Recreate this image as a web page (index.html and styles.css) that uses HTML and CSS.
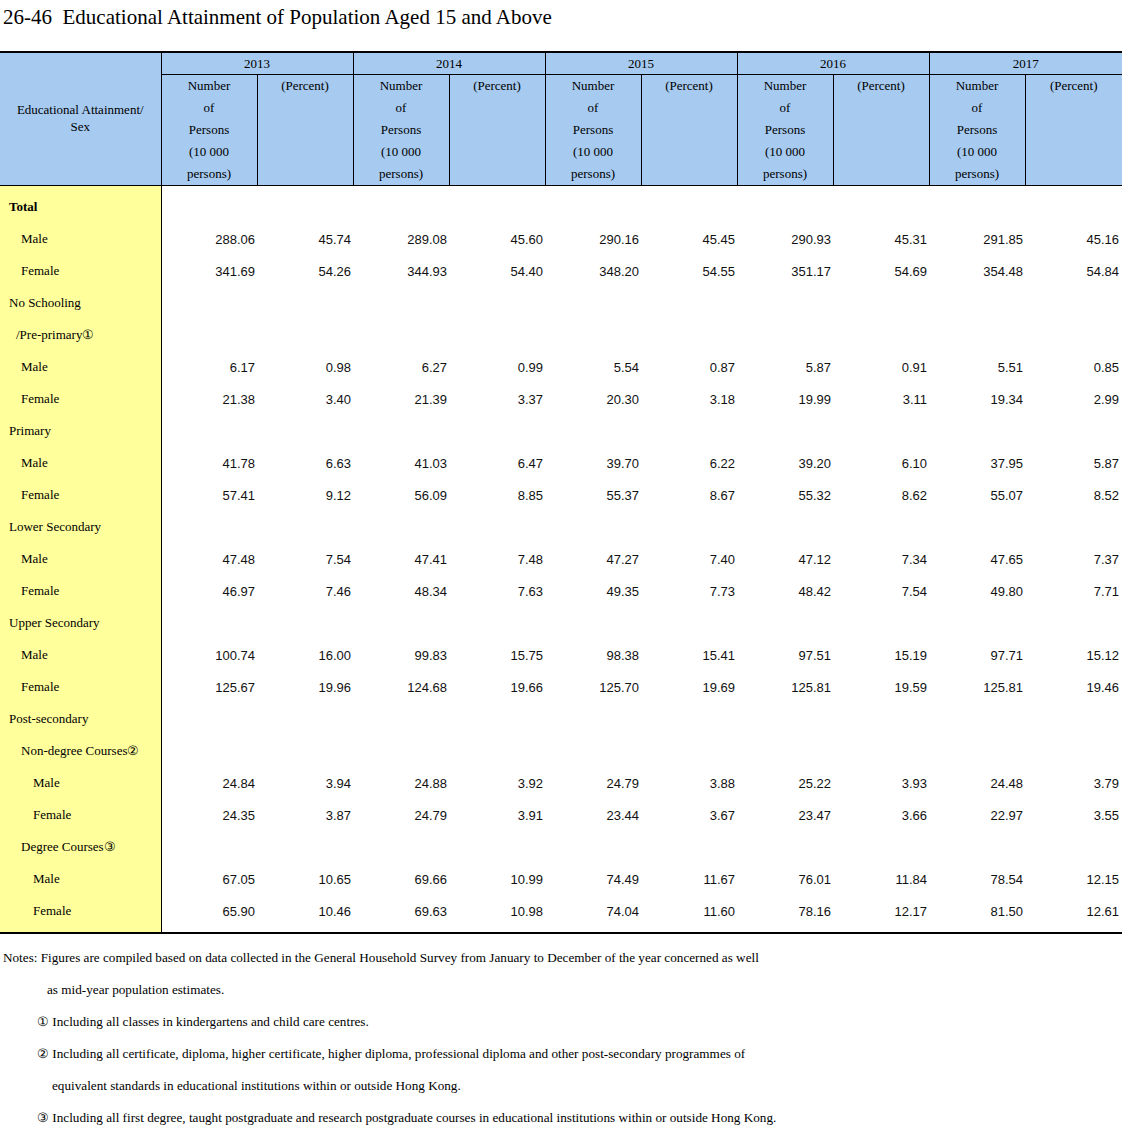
FILE: index.html
```html
<!DOCTYPE html>
<html>
<head>
<meta charset="utf-8">
<link rel="stylesheet" href="styles.css">
</head>
<body>
<h1 class="title">26-46&nbsp; Educational Attainment of Population Aged 15 and Above</h1>
<table class="tbl">
<colgroup>
<col class="c-label">
<col class="c-num"><col class="c-num"><col class="c-num"><col class="c-num"><col class="c-num">
<col class="c-num"><col class="c-num"><col class="c-num"><col class="c-num"><col class="c-last">
</colgroup>
<thead>
<tr class="yr">
<th class="h-label" rowspan="2">Educational Attainment/<br>Sex</th>
<th colspan="2">2013</th><th colspan="2">2014</th><th colspan="2">2015</th><th colspan="2">2016</th><th colspan="2">2017</th>
</tr>
<tr class="sub">
<th>Number<br>of<br>Persons<br>(10 000<br>persons)</th><th>(Percent)</th>
<th>Number<br>of<br>Persons<br>(10 000<br>persons)</th><th>(Percent)</th>
<th>Number<br>of<br>Persons<br>(10 000<br>persons)</th><th>(Percent)</th>
<th>Number<br>of<br>Persons<br>(10 000<br>persons)</th><th>(Percent)</th>
<th>Number<br>of<br>Persons<br>(10 000<br>persons)</th><th>(Percent)</th>
</tr>
</thead>
<tbody>
<tr><td class="lbl l1 bold">Total</td><td></td><td></td><td></td><td></td><td></td><td></td><td></td><td></td><td></td><td></td></tr>
<tr><td class="lbl l2">Male</td><td>288.06</td><td>45.74</td><td>289.08</td><td>45.60</td><td>290.16</td><td>45.45</td><td>290.93</td><td>45.31</td><td>291.85</td><td>45.16</td></tr>
<tr><td class="lbl l2">Female</td><td>341.69</td><td>54.26</td><td>344.93</td><td>54.40</td><td>348.20</td><td>54.55</td><td>351.17</td><td>54.69</td><td>354.48</td><td>54.84</td></tr>
<tr><td class="lbl l1">No Schooling</td><td></td><td></td><td></td><td></td><td></td><td></td><td></td><td></td><td></td><td></td></tr>
<tr><td class="lbl lp">/Pre-primary①</td><td></td><td></td><td></td><td></td><td></td><td></td><td></td><td></td><td></td><td></td></tr>
<tr><td class="lbl l2">Male</td><td>6.17</td><td>0.98</td><td>6.27</td><td>0.99</td><td>5.54</td><td>0.87</td><td>5.87</td><td>0.91</td><td>5.51</td><td>0.85</td></tr>
<tr><td class="lbl l2">Female</td><td>21.38</td><td>3.40</td><td>21.39</td><td>3.37</td><td>20.30</td><td>3.18</td><td>19.99</td><td>3.11</td><td>19.34</td><td>2.99</td></tr>
<tr><td class="lbl l1">Primary</td><td></td><td></td><td></td><td></td><td></td><td></td><td></td><td></td><td></td><td></td></tr>
<tr><td class="lbl l2">Male</td><td>41.78</td><td>6.63</td><td>41.03</td><td>6.47</td><td>39.70</td><td>6.22</td><td>39.20</td><td>6.10</td><td>37.95</td><td>5.87</td></tr>
<tr><td class="lbl l2">Female</td><td>57.41</td><td>9.12</td><td>56.09</td><td>8.85</td><td>55.37</td><td>8.67</td><td>55.32</td><td>8.62</td><td>55.07</td><td>8.52</td></tr>
<tr><td class="lbl l1">Lower Secondary</td><td></td><td></td><td></td><td></td><td></td><td></td><td></td><td></td><td></td><td></td></tr>
<tr><td class="lbl l2">Male</td><td>47.48</td><td>7.54</td><td>47.41</td><td>7.48</td><td>47.27</td><td>7.40</td><td>47.12</td><td>7.34</td><td>47.65</td><td>7.37</td></tr>
<tr><td class="lbl l2">Female</td><td>46.97</td><td>7.46</td><td>48.34</td><td>7.63</td><td>49.35</td><td>7.73</td><td>48.42</td><td>7.54</td><td>49.80</td><td>7.71</td></tr>
<tr><td class="lbl l1">Upper Secondary</td><td></td><td></td><td></td><td></td><td></td><td></td><td></td><td></td><td></td><td></td></tr>
<tr><td class="lbl l2">Male</td><td>100.74</td><td>16.00</td><td>99.83</td><td>15.75</td><td>98.38</td><td>15.41</td><td>97.51</td><td>15.19</td><td>97.71</td><td>15.12</td></tr>
<tr><td class="lbl l2">Female</td><td>125.67</td><td>19.96</td><td>124.68</td><td>19.66</td><td>125.70</td><td>19.69</td><td>125.81</td><td>19.59</td><td>125.81</td><td>19.46</td></tr>
<tr><td class="lbl l1">Post-secondary</td><td></td><td></td><td></td><td></td><td></td><td></td><td></td><td></td><td></td><td></td></tr>
<tr><td class="lbl l2">Non-degree Courses②</td><td></td><td></td><td></td><td></td><td></td><td></td><td></td><td></td><td></td><td></td></tr>
<tr><td class="lbl l3">Male</td><td>24.84</td><td>3.94</td><td>24.88</td><td>3.92</td><td>24.79</td><td>3.88</td><td>25.22</td><td>3.93</td><td>24.48</td><td>3.79</td></tr>
<tr><td class="lbl l3">Female</td><td>24.35</td><td>3.87</td><td>24.79</td><td>3.91</td><td>23.44</td><td>3.67</td><td>23.47</td><td>3.66</td><td>22.97</td><td>3.55</td></tr>
<tr><td class="lbl l2">Degree Courses③</td><td></td><td></td><td></td><td></td><td></td><td></td><td></td><td></td><td></td><td></td></tr>
<tr><td class="lbl l3">Male</td><td>67.05</td><td>10.65</td><td>69.66</td><td>10.99</td><td>74.49</td><td>11.67</td><td>76.01</td><td>11.84</td><td>78.54</td><td>12.15</td></tr>
<tr><td class="lbl l3">Female</td><td>65.90</td><td>10.46</td><td>69.63</td><td>10.98</td><td>74.04</td><td>11.60</td><td>78.16</td><td>12.17</td><td>81.50</td><td>12.61</td></tr>
</tbody>
</table>
<div class="notes">
<div class="n0">Notes: Figures are compiled based on data collected in the General Household Survey from January to December of the year concerned as well</div>
<div class="n1">as mid-year population estimates.</div>
<div class="n2">① Including all classes in kindergartens and child care centres.</div>
<div class="n2">② Including all certificate, diploma, higher certificate, higher diploma, professional diploma and other post-secondary programmes of</div>
<div class="n3">equivalent standards in educational institutions within or outside Hong Kong.</div>
<div class="n2">③ Including all first degree, taught postgraduate and research postgraduate courses in educational institutions within or outside Hong Kong.</div>
</div>
</body>
</html>
```

FILE: styles.css
```css
html, body {
  margin: 0;
  padding: 0;
  background: #fff;
  color: #000;
  font-family: "Liberation Serif", "Times New Roman", serif;
}

.title {
  margin: 0 0 17px 0;
  padding: 5px 3px;
  font-size: 21px;
  line-height: 24px;
  font-weight: normal;
}

.tbl {
  border-collapse: collapse;
  table-layout: fixed;
  width: 1122px;
  font-size: 13px;
}

.c-label { width: 161px; }
.c-num { width: 96px; }
.c-last { width: 97px; }

.tbl thead tr:first-child th {
  border-top: 2px solid #000;
}

.tbl th {
  background: #a6caf0;
  font-weight: normal;
  border: 1px solid #000;
  padding: 0;
  vertical-align: top;
  text-align: center;
}

.tbl th:last-child { border-right: none; }
.tbl .h-label {
  border-left: none;
  vertical-align: middle;
  line-height: 17px;
  padding-bottom: 3px;
}

.yr th {
  height: 21px;
  line-height: 21px;
}

.sub th {
  line-height: 22px;
  height: 110px;
}

.tbl td {
  height: 32px;
  padding: 0 2px 0 0;
  text-align: right;
  font-family: "Liberation Sans", Arial, sans-serif;
  font-size: 13px;
  color: #111;
  vertical-align: middle;
}

.tbl td:last-child { padding-right: 3px; }

.tbl td.lbl {
  background: #ffff9c;
  border-right: 1px solid #000;
  text-align: left;
  font-family: "Liberation Serif", "Times New Roman", serif;
  color: #000;
  white-space: nowrap;
}

.tbl tbody tr:first-child td { padding-top: 5px; }
.tbl tbody tr:last-child td {
  padding-bottom: 5px;
  border-bottom: 2px solid #000;
}

.l1 { padding-left: 9px !important; }
.l2 { padding-left: 21px !important; }
.l3 { padding-left: 33px !important; }
.lp { padding-left: 16px !important; }
.bold { font-weight: bold; }

.notes {
  padding-top: 8px;
  font-size: 13.2px;
  line-height: 32px;
}

.n0 { padding-left: 3px; }
.n1 { padding-left: 47px; }
.n2 { padding-left: 37px; }
.n3 { padding-left: 52px; }
```
